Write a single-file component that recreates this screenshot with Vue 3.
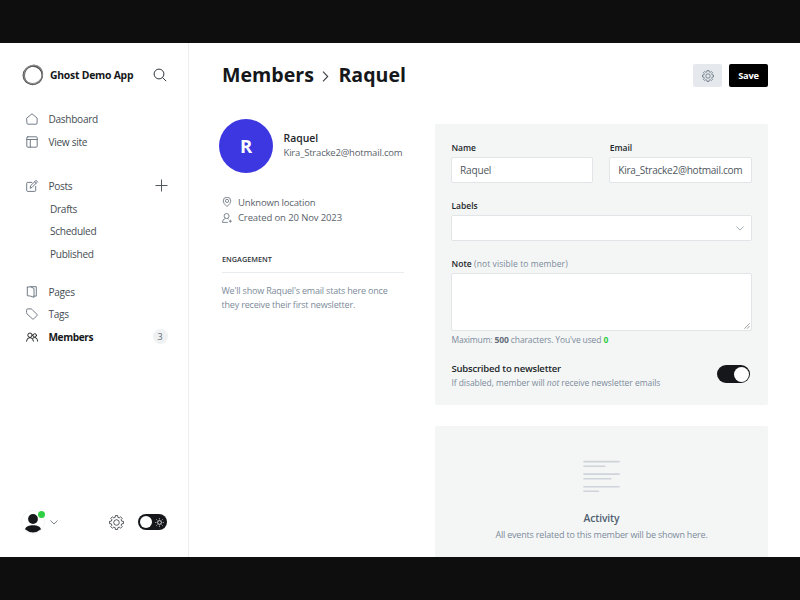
<script setup>
import { ref } from 'vue'

const topNav = [
  { label: 'Dashboard', icon: 'home' },
  { label: 'View site', icon: 'layout' },
]
const postNav = ['Drafts', 'Scheduled', 'Published']
const bottomNav = [
  { label: 'Pages', icon: 'pages' },
  { label: 'Tags', icon: 'tag' },
  { label: 'Members', icon: 'members', count: 3, active: true },
]
const name = ref('Raquel')
const email = ref('Kira_Stracke2@hotmail.com')

// Eight-toothed cog outline centred on (13, 13)
const gear = (() => {
  const points = []
  for (let i = 0; i < 8; i++) {
    for (const [offset, r] of [[-14, 9.3], [-9.500, 12.200], [9.500, 12.200], [14, 9.300]]) {
      const a = ((i * 45 + offset) * Math.PI) / 180
      points.push(`${(13 + r * Math.sin(a)).toFixed(2)} ${(13 - r * Math.cos(a)).toFixed(2)}`)
    }
  }
  return `M${points.join('L')}z`
})()
</script>

<template>
  <div class="screen">
    <div class="window">
      <aside class="sidebar">
        <header class="brand">
          <svg class="logo" viewBox="0 0 22 22" fill="none">
            <ellipse cx="10.700" cy="11.400" rx="9.500" ry="9.200" stroke="#444" stroke-width="1.300" />
            <ellipse cx="11.500" cy="10.700" rx="9" ry="9.500" stroke="#666" stroke-width="1" transform="rotate(35 11 11)" />
            <ellipse cx="11.600" cy="10.500" rx="9.700" ry="9" stroke="#888" stroke-width="1" transform="rotate(-40 11 11)" />
          </svg>
          <span class="brand-name">Ghost Demo App</span>
          <svg class="search" viewBox="0 0 14 14" fill="none" stroke="#30373d" stroke-width="1">
            <circle cx="6" cy="6" r="4.900" /><path d="M9.500 9.500 13.200 13.200" />
          </svg>
        </header>

        <nav class="group">
          <a v-for="item in topNav" :key="item.label" class="row">
            <svg v-if="item.icon === 'home'" class="icon" viewBox="0 0 12 12">
              <path d="M.9 5.100 6 .8l5.100 4.300v5.100q0 1-1 1H1.900q-1 0-1-1z" />
            </svg>
            <svg v-else class="icon" viewBox="0 0 12 12">
              <rect x=".8" y=".8" width="10.400" height="10.400" rx="1" /><path d="M.8 3.500h10.400M4.300 3.500v7.700" />
            </svg>
            <span>{{ item.label }}</span>
          </a>
        </nav>

        <nav class="group posts">
          <a class="row">
            <svg class="icon" viewBox="0 0 12 12">
              <path d="M5.800 2.400H1.700q-1 0-1 1v7q0 1 1 1h7q1 0 1-1V6.300M4.200 7.900l.5-2.300L9.500.9q.7-.6 1.400 0 .7.800 0 1.500L6.200 7.200zM8.600 1.800l1.500 1.500" />
            </svg>
            <span>Posts</span>
            <svg class="plus" viewBox="0 0 13 13" stroke="#50575e"><path d="M6.500.5v12M.5 6.500h12" /></svg>
          </a>
          <a v-for="label in postNav" :key="label" class="row sub">{{ label }}</a>
        </nav>

        <nav class="group pages">
          <a v-for="item in bottomNav" :key="item.label" class="row" :class="{ active: item.active }">
            <svg v-if="item.icon === 'pages'" class="icon" viewBox="0 0 12 12">
              <path d="M1.300 1.200 4.500.7h5.800v9.400H8M1.300 1.200v8.500l3.200.4 3.500 1.200V2.400L4.500.8" />
            </svg>
            <svg v-else-if="item.icon === 'tag'" class="icon" viewBox="0 0 12 12">
              <path d="M.6 1.900q0-1 1-1h3.300q.6 0 1 .4l5 5q.7.700 0 1.400l-3.100 3.100q-.7.700-1.400 0L1 5.900q-.4-.4-.4-1z" />
            </svg>
            <svg v-else class="icon" viewBox="0 0 12 12">
              <circle cx="4" cy="4.200" r="2.200" /><circle cx="8.800" cy="4.400" r="1.700" />
              <path d="M.5 10.200Q.8 6.600 4 6.600t3.500 3.600M6.900 7q4.400-2 4.700 3.200" />
            </svg>
            <span>{{ item.label }}</span>
            <span v-if="item.count" class="count">{{ item.count }}</span>
          </a>
        </nav>

        <footer class="user">
          <div class="face">
            <svg viewBox="0 0 24 24"><circle cx="12" cy="12" r="11.500" fill="#fff" stroke="#eceff1" stroke-width=".7" />
              <circle cx="12" cy="9" r="4.900" fill="#15171a" /><path d="M4 19.300C5 13.800 19 13.800 20 19.300Q12 25.800 4 19.300z" fill="#15171a" /></svg>
            <i class="online"></i>
          </div>
          <svg class="caret" viewBox="0 0 8 5" fill="none" stroke="#586069" stroke-width=".8"><path d="m.4.500 3.600 3.500L7.600.500" /></svg>
          <svg class="settings" viewBox="0 0 26 26" fill="none" stroke="#394047" stroke-width="1.500" stroke-linejoin="round">
            <path :d="gear" /><circle cx="13" cy="13" r="4.800" />
          </svg>
          <span class="theme">
            <i></i>
            <svg viewBox="0 0 9 9" fill="none" stroke="#fff" stroke-width=".8"><circle cx="4.500" cy="4.500" r="1.900" />
              <path d="M4.500.3v1M4.500 7.700v1M.3 4.500h1M7.700 4.500h1M1.500 1.500l.8.800M6.700 6.700l.8.800M1.500 7.500l.8-.8M6.700 2.300l.8-.8" /></svg>
          </span>
        </footer>
      </aside>

      <main class="main">
        <header class="head">
          <h1>
            <span>Members</span>
            <svg viewBox="0 0 7 11" fill="none" stroke="#394047" stroke-width="1.100"><path d="m1 .7 4.700 4.800L1 10.300" /></svg>
            <span>{{ name }}</span>
          </h1>
          <button class="btn gear">
            <svg viewBox="0 0 26 26" fill="none" stroke="#626d79" stroke-width="1.700" stroke-linejoin="round">
              <path :d="gear" /><circle cx="13" cy="13" r="4.800" />
            </svg>
          </button>
          <button class="btn save">Save</button>
        </header>

        <div class="columns">
          <section class="profile">
            <div class="who">
              <div class="initial">R</div>
              <div>
                <div class="who-name">{{ name }}</div>
                <div class="who-mail">{{ email }}</div>
              </div>
            </div>
            <div class="facts">
              <p>
                <svg viewBox="0 0 10 10"><path d="M5 9.600Q1.200 6.300 1.200 4a3.800 3.800 0 0 1 7.600 0Q8.800 6.300 5 9.600z" /><circle cx="5" cy="3.900" r="1.600" /></svg>
                <span class="loc">Unknown location</span>
              </p>
              <p>
                <svg viewBox="0 0 10 10"><circle cx="4.600" cy="3" r="2.500" /><path d="M5.800 9.400H.4Q.4 6 3.500 5.500M5.700 5.500l1 .6M8.300 6.700v3M6.800 8.200h3" /></svg>
                <span class="made">Created on 20 Nov 2023</span>
              </p>
            </div>
            <h4>ENGAGEMENT</h4>
            <p class="stats">We'll show Raquel's email stats here once<br />they receive their first newsletter.</p>
          </section>

          <div class="cards">
            <section class="card form">
              <div class="pair">
                <div><label>Name</label><div class="field">{{ name }}</div></div>
                <div><label>Email</label><div class="field mail">{{ email }}</div></div>
              </div>
              <label>Labels</label>
              <div class="field select">
                <svg viewBox="0 0 8 5" fill="none" stroke="#8e989f" stroke-width=".8"><path d="m.4.500 3.600 3.600L7.600.500" /></svg>
              </div>
              <label class="note">Note <span class="hint">(not visible to member)</span></label>
              <div class="field area">
                <svg viewBox="0 0 6 6" stroke="#777" stroke-width=".7"><path d="M.3 5.700 5.700.3M3 5.700 5.700 3" /></svg>
              </div>
              <p class="max">Maximum: <b>500</b> characters. You've used <b class="zero">0</b></p>
              <div class="subscribe">
                <div>
                  <div class="sub-title">Subscribed to newsletter</div>
                  <div class="sub-text">If disabled, member will <em>not</em> receive newsletter emails</div>
                </div>
                <span class="toggle"><i></i></span>
              </div>
            </section>

            <section class="card activity">
              <svg viewBox="0 0 37 33" fill="none" stroke="#ced4d9" stroke-width="1.600" stroke-linecap="round">
                <path d="M.9 1.600h35.200M.9 6.200h20.900M.9 14.100h35.200M.9 18.700h27M.9 26.700h35.200M.9 31.300h14.600" />
              </svg>
              <div class="act-title">Activity</div>
              <div class="act-text">All events related to this member will be shown here.</div>
            </section>
          </div>
        </div>
      </main>
    </div>
  </div>
</template>

<style>
body { background: #0e0e0e; }
</style>

<style scoped>
* { box-sizing: border-box; }
.screen { width: 800px; height: 600px; padding: 43px 0; background: #0e0e0e; overflow: hidden; font-family: "Open Sans", "Noto Sans", sans-serif; color: #15171a; }
.window { display: flex; height: 514px; background: #fff; overflow: hidden; }
svg { display: block; flex: none; }
p, h1, h4 { margin: 0; }

.sidebar { width: 189px; flex: none; border-right: 1px solid #eceef0; display: flex; flex-direction: column; padding: 21px 21px 0 21px; }
.brand { display: flex; align-items: center; height: 22px; }
.logo { width: 22px; height: 22px; margin: .5px -.5px 0 .5px; }
.brand-name { margin-left: 7px; font-size: 10.400px; font-weight: 700; letter-spacing: -.24px; white-space: nowrap; }
.search { width: 14px; height: 14px; margin-left: auto; margin-right: .5px; }
.group { margin-top: 21.750px; font-size: 10.100px; letter-spacing: -.3px; color: #454c53; }
.group.pages { margin-top: 15.200px; }
.row { display: flex; align-items: center; height: 22.600px; padding-left: 4.500px; white-space: nowrap; }
.icon { width: 12px; height: 12px; margin-right: 11px; fill: none; stroke: #626d79; stroke-width: .9; stroke-linejoin: round; stroke-linecap: round; }
.sub { padding-left: 29px; }
.plus { width: 13px; height: 13px; margin-left: auto; margin-right: -.5px; }
.active { font-weight: 700; letter-spacing: -.4px; color: #15171a; }
.active .icon { stroke: #15171a; }
.count { margin-left: auto; width: 15px; height: 15px; margin-right: -.5px; border-radius: 50%; background: #eff1f2; color: #626d79; font-weight: 400; font-size: 9px; line-height: 15px; letter-spacing: 0; text-align: center; }
.user { margin-top: auto; height: 70px; display: flex; align-items: center; }
.face { position: relative; width: 24px; height: 24px; }
.face svg { width: 24px; height: 24px; }
.online { position: absolute; right: 0; top: .5px; width: 7px; height: 7px; border-radius: 50%; background: #30cf43; }
.caret { width: 8px; height: 5px; margin-left: 5px; }
.settings { width: 15px; height: 15px; margin-left: 51px; }
.theme { display: flex; align-items: center; justify-content: space-between; width: 29px; height: 16px; margin-left: 14px; padding: 0 3.500px 0 1.500px; border-radius: 8px; background: #15171a; }
.theme i { width: 12.500px; height: 12.500px; border-radius: 50%; background: #fff; }
.theme svg { width: 9px; height: 9px; }

.main { flex: 1; min-width: 0; padding: 21px 32px 0 30px; }
.head { display: flex; height: 23px; align-items: center; }
h1 { display: flex; align-items: center; margin: -2px auto 0 3px; font-size: 19.600px; line-height: 24px; font-weight: 700; }
h1 svg { width: 7px; height: 11px; margin: 4px 9px 0 8.500px; }
.btn { height: 23px; border: 0; border-radius: 2px; padding: 0; font-family: inherit; display: flex; align-items: center; justify-content: center; }
.gear { width: 29px; background: #e5e9ed; }
.gear svg { width: 12px; height: 12px; }
.save { width: 39px; margin-left: 7px; background: #000; color: #fff; font-size: 9.300px; font-weight: 700; letter-spacing: -.25px; }

.columns { display: flex; justify-content: space-between; align-items: flex-start; }
.profile { width: 185px; padding-top: 31.500px; }
.who { display: flex; align-items: center; height: 54px; white-space: nowrap; }
.initial { width: 54px; height: 54px; border-radius: 50%; background: #3c37e1; color: #fff; font-size: 18.500px; font-weight: 700; line-height: 53px; text-align: center; margin-right: 10.500px; flex: none; }
.who-name { font-size: 10.400px; line-height: 15px; font-weight: 600; color: #22262a; }
.who-mail { margin-top: -1px; font-size: 9.500px; line-height: 15px; letter-spacing: -.18px; color: #5a626a; }
.facts { margin: 22px 0 0 3px; font-size: 9.500px; color: #5a626a; }
.facts p { display: flex; align-items: center; height: 15.500px; white-space: nowrap; }
.facts svg { width: 10px; height: 10px; margin-right: 6px; fill: none; stroke: #626d79; stroke-width: .8; }
.loc { letter-spacing: -.17px; }
.made { letter-spacing: -.12px; }
h4 { margin: 27px 0 0 3px; height: 20px; padding-bottom: 6px; border-bottom: 1px solid #e9ecee; font-size: 7.300px; line-height: 13px; font-weight: 600; color: #30363c; }
.stats { margin: 11.500px 0 0 2.500px; font-size: 9px; line-height: 13.500px; letter-spacing: -.19px; color: #7c8b9a; white-space: nowrap; }

.cards { width: 333px; padding-top: 37px; }
.card { background: #f4f6f6; border-radius: 2px; }
.form { height: 280.500px; padding: 17px 16.500px 0 16px; }
.pair { display: grid; grid-template-columns: 1fr 1fr; column-gap: 16px; margin-bottom: 16px; }
label { display: block; height: 16px; padding-left: .4px; font-size: 8.500px; line-height: 13px; font-weight: 600; color: #22262a; white-space: nowrap; }
.note { letter-spacing: .08px; }
.field { height: 26px; border: 1px solid #e1e5e7; border-radius: 2px; background: #fff; font-size: 10.100px; line-height: 25px; letter-spacing: -.2px; padding-left: 8px; color: #50575e; white-space: nowrap; }
.mail { letter-spacing: -.28px; }
.select { display: flex; align-items: center; justify-content: flex-end; padding-right: 7px; margin-bottom: 16px; }
.select svg { width: 8px; height: 5px; }
.hint { font-weight: 400; color: #7c8b9a; }
.area { height: 58px; display: flex; align-items: flex-end; justify-content: flex-end; padding: 1px; }
.area svg { width: 6px; height: 6px; }
.max { margin-top: 2px; padding-left: .4px; font-size: 8.500px; line-height: 13px; letter-spacing: -.13px; color: #7c8b9a; white-space: nowrap; }
.max b { color: #626d79; }
.max .zero { color: #30cf43; }
.subscribe { display: flex; justify-content: space-between; margin-top: 16px; padding-left: .4px; white-space: nowrap; }
.sub-title { font-size: 9.500px; line-height: 14px; font-weight: 600; letter-spacing: -.19px; color: #22262a; }
.sub-text { font-size: 8.500px; line-height: 13px; letter-spacing: -.05px; color: #7c8b9a; }
.toggle { display: flex; justify-content: flex-end; align-items: center; width: 33px; height: 18px; border-radius: 9px; background: #15171a; padding-right: 1.500px; margin: 3px 1.500px 0 0; }
.toggle i { width: 15px; height: 15px; border-radius: 50%; background: #fff; }
.activity { margin-top: 21.500px; height: 180px; padding-top: 33.500px; display: flex; flex-direction: column; align-items: center; white-space: nowrap; }
.activity svg { width: 37px; height: 33px; }
.act-title { margin-top: 18px; font-size: 10.300px; line-height: 15px; font-weight: 600; letter-spacing: -.1px; color: #50606f; }
.act-text { margin-top: 2px; font-size: 9px; line-height: 14px; letter-spacing: -.19px; color: #7c8b9a; }
</style>
